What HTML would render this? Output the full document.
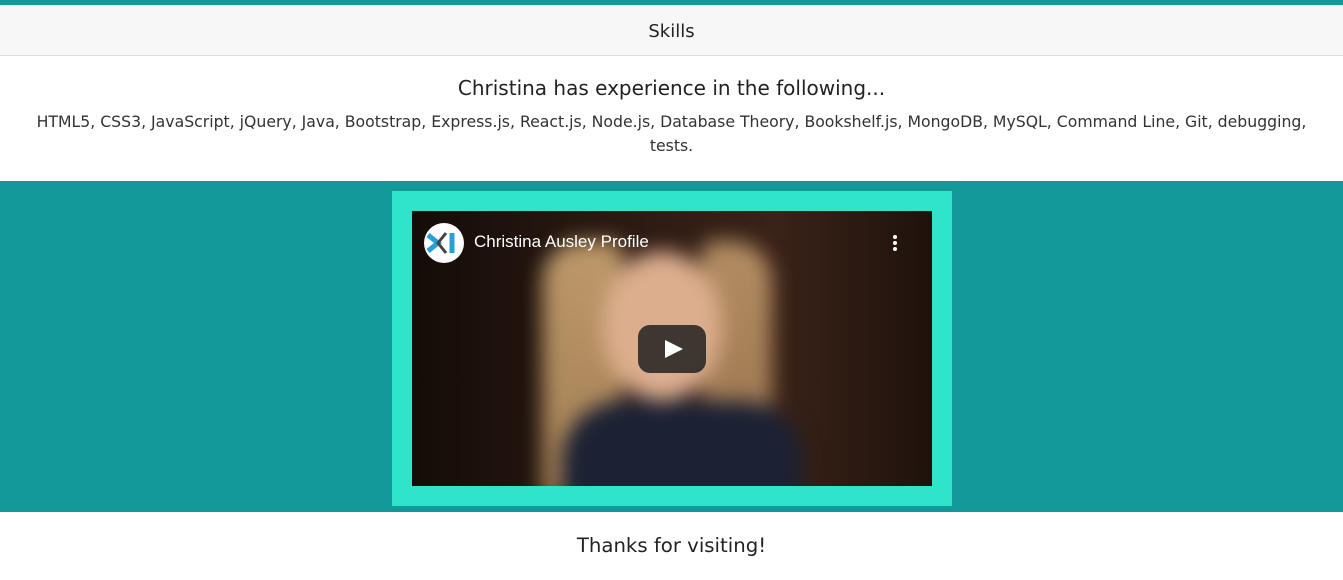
<!DOCTYPE html>
<html><head><meta charset="utf-8"><style>
*{margin:0;padding:0;box-sizing:border-box}
body{width:1343px;height:570px;overflow:hidden;background:#fff;font-family:"DejaVu Sans","Liberation Sans",sans-serif;color:#222}
.top{height:5px;background:#14999b}
.hdr{height:51px;background:#f7f7f7;border-bottom:1px solid #ddd;text-align:center;font-size:18px;line-height:54px;color:#222}
.sec{height:125px;text-align:center}
.sec h2{font-weight:normal;font-size:20px;padding-top:20px;line-height:24px}
.sec p{font-size:15.7px;line-height:24px;margin-top:10px;white-space:nowrap;color:#333}
.teal{position:absolute;top:181px;left:0;width:1343px;height:331px;background:#14999b}
.frame{position:absolute;left:392px;top:191px;width:560px;height:315px;background:#30e3cb}
.vid{position:absolute;left:412px;top:211px;width:520px;height:275px;overflow:hidden;
background:linear-gradient(90deg,#140c08,#2b1a12 40%,#3a2218 70%,#1e120c)}
.blur{position:absolute;left:0;top:0;width:520px;height:275px;filter:blur(10px)}
.body{position:absolute;left:150px;top:190px;width:240px;height:120px;background:#1c2134;border-radius:60px 60px 0 0}
.hairL{position:absolute;left:130px;top:30px;width:80px;height:260px;background:linear-gradient(#d8b07a,#b89060);border-radius:40px 10px 0 0;opacity:.85}
.hairR{position:absolute;left:290px;top:30px;width:70px;height:260px;background:linear-gradient(#c9a070,#a88055);border-radius:10px 40px 0 0;opacity:.85}
.face{position:absolute;left:190px;top:40px;width:120px;height:150px;background:#dcae8e;border-radius:50%}
.play{position:absolute;left:226px;top:114px;width:68px;height:48px;background:rgba(33,33,33,.85);border-radius:12px}
.play:after{content:"";position:absolute;left:27px;top:15px;border-left:18px solid #fff;border-top:9px solid transparent;border-bottom:9px solid transparent}
.logo{position:absolute;left:12px;top:12px;width:40px;height:40px;border-radius:50%;background:#fff}
.title{position:absolute;left:62px;top:21px;color:#fff;font-family:"Liberation Sans",sans-serif;font-size:17px}
.dots{position:absolute;left:481px;top:24px;width:4px}
.dots i{display:block;width:4px;height:4px;background:#fff;border-radius:50%;margin-bottom:2px}
.foot{position:absolute;top:512px;left:0;width:1343px;text-align:center;font-size:19.7px;line-height:68px}
</style></head><body>
<div class="top"></div>
<div class="hdr">Skills</div>
<div class="sec"><h2>Christina has experience in the following...</h2>
<p>HTML5, CSS3, JavaScript, jQuery, Java, Bootstrap, Express.js, React.js, Node.js, Database Theory, Bookshelf.js, MongoDB, MySQL, Command Line, Git, debugging,<br>tests.</p></div>
<div class="teal"></div>
<div class="frame"></div>
<div class="vid">
<div class="blur"><div class="hairL"></div><div class="hairR"></div><div class="face"></div><div class="body"></div></div>
<div class="play"></div>
<div class="logo"><svg width="40" height="40" viewBox="0 0 40 40"><path d="M4 12 L14 20 L4 28" stroke="#2a9fd6" stroke-width="5" fill="none"/><path d="M22 10 L14 20 L22 30" stroke="#444" stroke-width="3" fill="none"/><path d="M28 10 L28 30" stroke="#2a9fd6" stroke-width="5"/></svg></div>
<div class="title">Christina Ausley Profile</div>
<div class="dots"><i></i><i></i><i></i></div>
</div>
<div class="foot">Thanks for visiting!</div>
</body></html>
